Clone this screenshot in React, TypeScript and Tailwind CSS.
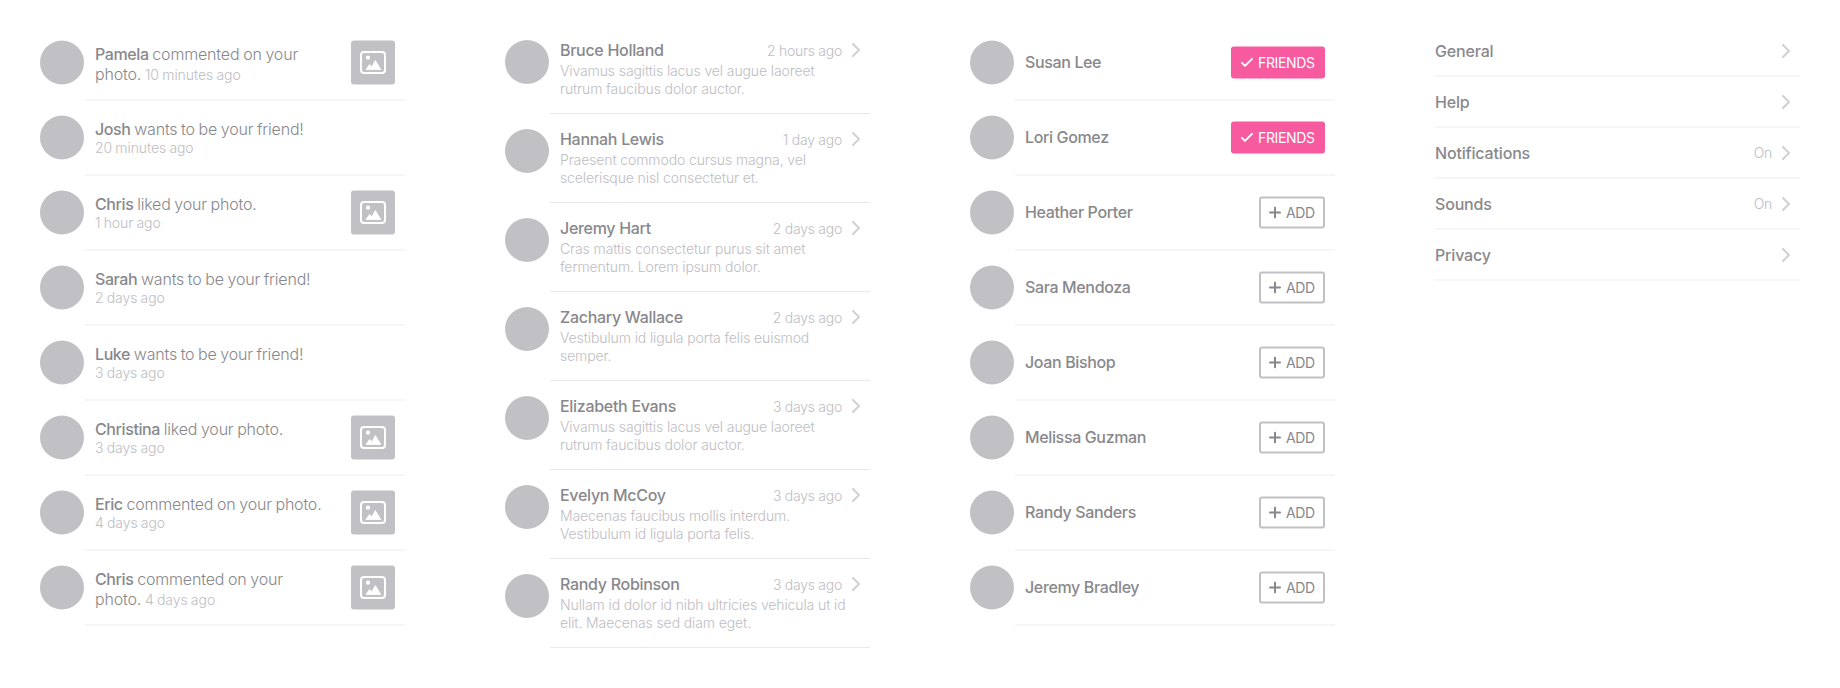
import React from "react";

type Activity = { name: string; text: string; time: string; photo?: boolean; wraps?: boolean };

const activities: Activity[] = [
  { name: "Pamela", text: "commented on your photo.", time: "10 minutes ago", photo: true, wraps: true },
  { name: "Josh", text: "wants to be your friend!", time: "20 minutes ago" },
  { name: "Chris", text: "liked your photo.", time: "1 hour ago", photo: true },
  { name: "Sarah", text: "wants to be your friend!", time: "2 days ago" },
  { name: "Luke", text: "wants to be your friend!", time: "3 days ago" },
  { name: "Christina", text: "liked your photo.", time: "3 days ago", photo: true },
  { name: "Eric", text: "commented on your photo.", time: "4 days ago", photo: true },
  { name: "Chris", text: "commented on your photo.", time: "4 days ago", photo: true, wraps: true },
];

const messages = [
  { name: "Bruce Holland", time: "2 hours ago", lines: ["Vivamus sagittis lacus vel augue laoreet", "rutrum faucibus dolor auctor."] },
  { name: "Hannah Lewis", time: "1 day ago", lines: ["Praesent commodo cursus magna, vel", "scelerisque nisl consectetur et."] },
  { name: "Jeremy Hart", time: "2 days ago", lines: ["Cras mattis consectetur purus sit amet", "fermentum. Lorem ipsum dolor."] },
  { name: "Zachary Wallace", time: "2 days ago", lines: ["Vestibulum id ligula porta felis euismod", "semper."] },
  { name: "Elizabeth Evans", time: "3 days ago", lines: ["Vivamus sagittis lacus vel augue laoreet", "rutrum faucibus dolor auctor."] },
  { name: "Evelyn McCoy", time: "3 days ago", lines: ["Maecenas faucibus mollis interdum.", "Vestibulum id ligula porta felis."] },
  { name: "Randy Robinson", time: "3 days ago", lines: ["Nullam id dolor id nibh ultricies vehicula ut id", "elit. Maecenas sed diam eget."] },
];

const people = [
  { name: "Susan Lee", friend: true },
  { name: "Lori Gomez", friend: true },
  { name: "Heather Porter", friend: false },
  { name: "Sara Mendoza", friend: false },
  { name: "Joan Bishop", friend: false },
  { name: "Melissa Guzman", friend: false },
  { name: "Randy Sanders", friend: false },
  { name: "Jeremy Bradley", friend: false },
];

const settings = [
  { label: "General", value: "" },
  { label: "Help", value: "" },
  { label: "Notifications", value: "On" },
  { label: "Sounds", value: "On" },
  { label: "Privacy", value: "" },
];

function Chevron() {
  return (
    <svg className="block h-[14px] w-[8px] shrink-0" viewBox="0 0 8 14" fill="none" stroke="#d1d1d4" strokeWidth="2" strokeLinecap="round" strokeLinejoin="round">
      <path d="M1 1l6 6-6 6" />
    </svg>
  );
}

function Photo() {
  return (
    <div className="mt-[14px] h-11 w-11 shrink-0 translate-y-[0.5px] rounded-[3px] bg-[#c1c0c5]">
      <svg className="block h-11 w-11" viewBox="0 0 44 44" fill="none">
        <rect x="10" y="11.5" width="24" height="21" rx="3" stroke="#fff" strokeWidth="2" />
        <circle cx="17" cy="17.2" r="2.1" fill="#fff" />
        <path d="M15 29l3.5-5 2.3 2.2 3.6-6.2 5.4 9z" fill="#fff" stroke="#fff" strokeWidth="0.8" strokeLinejoin="round" />
      </svg>
    </div>
  );
}

function Avatar({ half = false }: { half?: boolean }) {
  return <div className={half ? "mt-[14px] h-11 w-11 shrink-0 translate-y-[0.5px] rounded-full bg-[#c1c0c5]" : "mt-[15px] h-11 w-11 shrink-0 rounded-full bg-[#c1c0c5]"} />;
}

function ActivityRow({ item }: { item: Activity }) {
  return (
    <li className="flex h-[75px]">
      <Avatar half />
      <div className="ml-px flex flex-1 border-b-2 border-[#f6f6f7] pr-[10px] pl-[10px]">
        <p className={item.wraps ? "w-[210px] pt-[18px] text-base leading-5 font-light tracking-[-0.17px] [word-spacing:-0.6px]" : "flex-1 pt-[18px] text-base leading-5 font-light tracking-[-0.19px] [word-spacing:-0.6px] whitespace-nowrap"}>
          <span className="font-medium tracking-[-0.4px]">{item.name}</span> {item.text}
          {item.wraps ? " " : <br />}
          <span className={item.wraps ? "text-sm leading-5 font-light tracking-[-0.06px] text-[#bebdc3]" : "block text-sm leading-[17px] font-light tracking-[-0.08px] text-[#bebdc3]"}>{item.time}</span>
        </p>
        <div className="ml-auto">{item.photo && <Photo />}</div>
      </div>
    </li>
  );
}

function MessageRow({ item }: { item: (typeof messages)[number] }) {
  return (
    <li className="flex h-[89px]">
      <Avatar />
      <div className="ml-px flex-1 border-b border-[#e9e9eb] pt-[15px] pl-[10px]">
        <div className="flex h-5 items-center pr-[10px]">
          <h3 className="flex-1 text-base leading-5 font-medium tracking-[-0.3px]">{item.name}</h3>
          <span className="mt-px mr-[10px] text-sm leading-5 font-light tracking-[-0.26px] text-[#bebdc3]">{item.time}</span>
          <Chevron />
        </div>
        <p className="mt-[2px] text-sm leading-[18px] font-light tracking-[-0.11px] whitespace-nowrap text-[#bebdc3]">
          {item.lines[0]}
          <br />
          {item.lines[1]}
        </p>
      </div>
    </li>
  );
}

function FriendButton({ friend }: { friend: boolean }) {
  return friend ? (
    <button className="flex h-8 w-[94px] translate-y-[0.5px] items-center rounded-[3px] bg-[#f85a9f] pl-[10px] text-sm tracking-[-0.36px] text-white">
      <svg className="mr-[5px] h-3 w-3" viewBox="0 0 12 12" fill="none" stroke="#fff" strokeWidth="2" strokeLinecap="round" strokeLinejoin="round">
        <path d="M1 6.4l3 3L11 2.4" />
      </svg>
      FRIENDS
    </button>
  ) : (
    <button className="flex h-8 w-[66px] translate-y-[0.5px] items-center rounded-[3px] border-2 border-[#c1c0c5] pl-2 text-sm tracking-[-0.4px] text-[#88888c]">
      <svg className="mr-[5px] h-3 w-3" viewBox="0 0 12 12" fill="none" stroke="#88888c" strokeWidth="2" strokeLinecap="round">
        <path d="M6 1v10M1 6h10" />
      </svg>
      ADD
    </button>
  );
}

export default function App() {
  return (
    <main className="flex h-[688px] w-[1840px] gap-[100px] overflow-hidden bg-white px-10 font-['Inter',sans-serif] text-[#88888c]">
      <ul className="w-[365px] pt-[26px]">
        {activities.map((item, i) => (
          <ActivityRow key={i} item={item} />
        ))}
      </ul>
      <ul className="w-[365px] pt-[25px]">
        {messages.map((item) => (
          <MessageRow key={item.name} item={item} />
        ))}
      </ul>
      <ul className="w-[365px] pt-[26px]">
        {people.map((item) => (
          <li key={item.name} className="flex h-[75px]">
            <Avatar half />
            <div className="ml-px flex flex-1 items-center border-b-2 border-[#f6f6f7] pr-[10px] pb-px pl-[10px]">
              <h3 className="flex-1 text-base leading-5 font-medium tracking-[-0.36px]">{item.name}</h3>
              <FriendButton friend={item.friend} />
            </div>
          </li>
        ))}
      </ul>
      <ul className="w-[365px] pt-[26px]">
        {settings.map((item) => (
          <li key={item.label} className="flex h-[51px] items-center border-b-2 border-[#f6f6f7] pr-[10px]">
            <h3 className="flex-1 text-base leading-5 font-medium tracking-[-0.17px]">{item.label}</h3>
            <span className="mt-px mr-[10px] text-sm leading-5 font-light tracking-[-0.3px] text-[#bebdc3]">{item.value}</span>
            <Chevron />
          </li>
        ))}
      </ul>
    </main>
  );
}
